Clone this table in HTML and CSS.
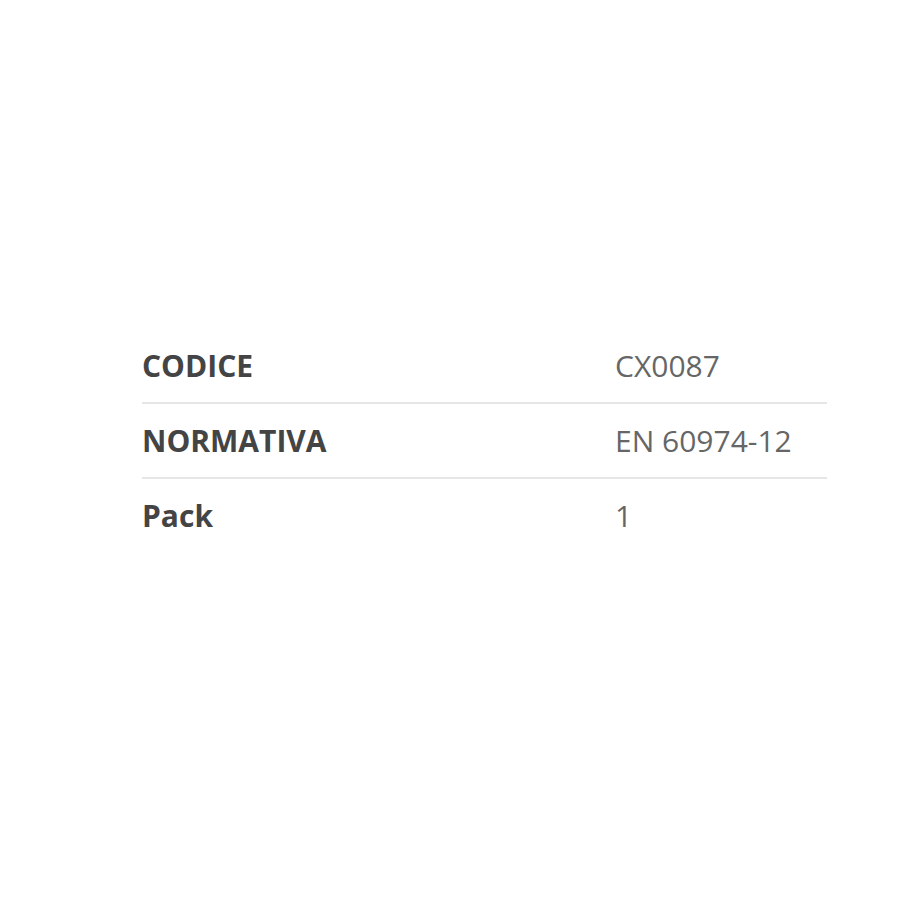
FILE: index.html
```html
<!DOCTYPE html>
<html>
<head>
<meta charset="utf-8">
<link rel="stylesheet" href="styles.css">
</head>
<body>
<div class="page">
  <table class="specs">
    <tr class="row">
      <th class="label">CODICE</th>
      <td class="value">CX0087</td>
    </tr>
    <tr class="row">
      <th class="label">NORMATIVA</th>
      <td class="value">EN 60974-12</td>
    </tr>
    <tr class="row">
      <th class="label">Pack</th>
      <td class="value">1</td>
    </tr>
  </table>
</div>
</body>
</html>
```
FILE: styles.css
```css
html, body {
  margin: 0;
  padding: 0;
  background: #fff;
}
.page {
  padding-top: 329px;
  padding-left: 142px;
  font-family: "Open Sans", "Liberation Sans", sans-serif;
}
.specs {
  width: 685px;
  border-collapse: collapse;
}
.row + .row {
  border-top: 2px solid #e6e6e6;
}
.label {
  text-align: left;
  width: 473px;
  font-weight: 700;
  font-size: 30px;
  color: #444;
  height: 73px;
  padding: 0;
  line-height: 1;
}
.value {
  font-size: 30px;
  color: #666;
  padding: 0;
  line-height: 1;
}
```
